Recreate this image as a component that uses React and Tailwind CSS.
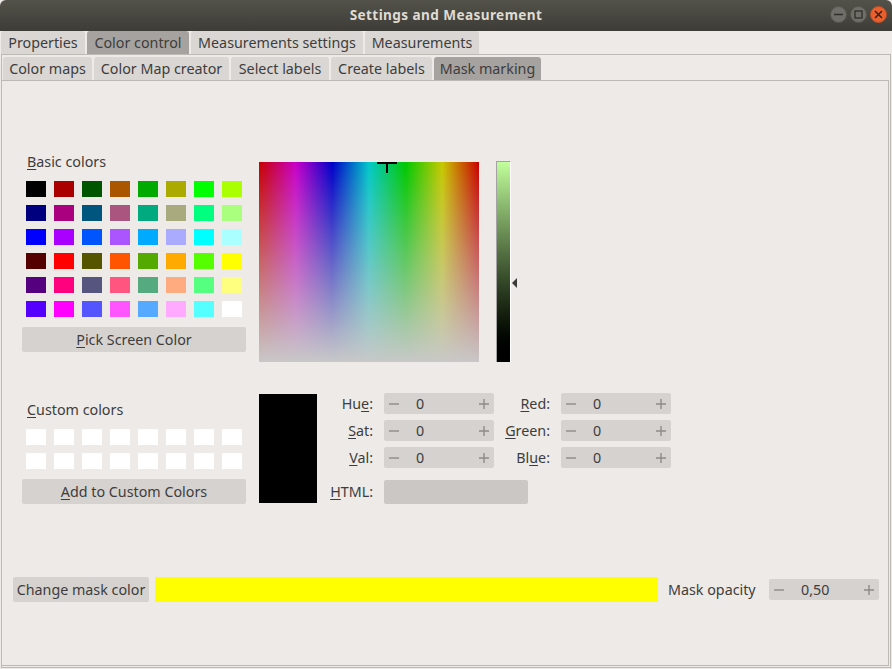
import React from 'react';

const basicColors = [
    '#000000', '#aa0000', '#005500', '#aa5500', '#00aa00', '#aaaa00', '#00ff00', '#aaff00',
    '#00007f', '#aa007f', '#00557f', '#aa557f', '#00aa7f', '#aaaa7f', '#00ff7f', '#aaff7f',
    '#0000ff', '#aa00ff', '#0055ff', '#aa55ff', '#00aaff', '#aaaaff', '#00ffff', '#aaffff',
    '#550000', '#ff0000', '#555500', '#ff5500', '#55aa00', '#ffaa00', '#55ff00', '#ffff00',
    '#55007f', '#ff007f', '#55557f', '#ff557f', '#55aa7f', '#ffaa7f', '#55ff7f', '#ffff7f',
    '#5500ff', '#ff00ff', '#5555ff', '#ff55ff', '#55aaff', '#ffaaff', '#55ffff', '#ffffff',
];

const outerTabs = [
    { label: 'Properties', width: 'w-[84px]' },
    { label: 'Color control', width: 'w-[102px]', active: true },
    { label: 'Measurements settings', width: 'w-[172px]' },
    { label: 'Measurements', width: 'w-[114px]' },
];

const innerTabs = [
    { label: 'Color maps', width: 'w-[89px]' },
    { label: 'Color Map creator', width: 'w-[135px]' },
    { label: 'Select labels', width: 'w-[98px]' },
    { label: 'Create labels', width: 'w-[101px]' },
    { label: 'Mask marking', width: 'w-[107px]', active: true },
];

function Tab({ label, width, active }) {
    return (
        <div className={`${width} h-[23px] flex items-center justify-center rounded-t-[3px] whitespace-nowrap ${active ? 'bg-[#a6a29f]' : 'bg-[#dad6d3]'}`}>
            {label}
        </div>
    );
}

function Spin({ value }) {
    return (
        <div className="w-[110px] h-[21px] flex items-center rounded-[2px] bg-[#d6d2cf]">
            <svg className="ml-[5px] shrink-0" width="10" height="10" viewBox="0 0 10 10">
                <path d="M0 5H10" stroke="#8f8b88" strokeWidth="1.4" />
            </svg>
            <span className="ml-[17px]">{value}</span>
            <svg className="ml-auto mr-[5px] shrink-0" width="10" height="10" viewBox="0 0 10 10">
                <path d="M0 5H10M5 0V10" stroke="#8f8b88" strokeWidth="1.4" />
            </svg>
        </div>
    );
}

function SpinRow({ left, leftKey, leftAfter, right, rightKey, rightAfter }) {
    return (
        <div className="flex items-center h-[21px]">
            <div className="w-[56px] text-right whitespace-nowrap">{left}<span className="underline underline-offset-2">{leftKey}</span>{leftAfter}</div>
            <div className="ml-[11px]"><Spin value="0" /></div>
            <div className="w-[56px] text-right whitespace-nowrap">{right}<span className="underline underline-offset-2">{rightKey}</span>{rightAfter}</div>
            <div className="ml-[11px]"><Spin value="0" /></div>
        </div>
    );
}

function WindowButton({ children, close }) {
    return (
        <div className={`w-[17px] h-[17px] rounded-full flex items-center justify-center border ${close ? 'bg-[#e9602f] border-[#b94d26]' : 'bg-[#6f6e68] border-[#55544e]'}`}>
            {children}
        </div>
    );
}

export default function App() {
    return (
        <div className="w-[892px] h-[669px] overflow-hidden flex flex-col bg-[#eeeae7] text-[#3d3d3d] text-[14.3px] leading-[20px] font-['Noto_Sans',sans-serif]">
            <div className="h-[31px] shrink-0 pb-[2px] flex items-center justify-center relative rounded-t-[6px] bg-gradient-to-b from-[#53524a] to-[#3d3c37]">
                <span className="text-[13.6px] font-bold tracking-[0.4px] text-[#dfdbd2]">Settings and Measurement</span>
                <div className="absolute right-[5px] top-[6px] flex gap-[3px]">
                    <WindowButton>
                        <svg width="9" height="9" viewBox="0 0 9 9"><path d="M0 4.5H9" stroke="#2f2e2a" strokeWidth="1.5" /></svg>
                    </WindowButton>
                    <WindowButton>
                        <svg width="9" height="9" viewBox="0 0 9 9"><rect x="1" y="1" width="7" height="7" fill="none" stroke="#2f2e2a" strokeWidth="1.3" /></svg>
                    </WindowButton>
                    <WindowButton close>
                        <svg width="9" height="9" viewBox="0 0 9 9"><path d="M1 1L8 8M8 1L1 8" stroke="#3a2015" strokeWidth="1.5" /></svg>
                    </WindowButton>
                </div>
            </div>

            <div className="flex gap-[2px] pl-[1px] shrink-0">
                {outerTabs.map((tab) => <Tab key={tab.label} {...tab} />)}
            </div>

            <div className="flex-1 flex flex-col mx-[1px] mb-[1px] border border-[#bdb9b5] pt-[2px]">
                <div className="flex gap-[2px] pl-[1px] shrink-0">
                    {innerTabs.map((tab) => <Tab key={tab.label} {...tab} />)}
                </div>

                <div className="flex-1 flex flex-col ml-[-1px] mr-px mb-[1px] border border-[#bdb9b5] pt-[71px]">
                    <div className="flex pl-[20px]">
                        <div className="w-[224px]">
                            <div className="pl-[5px] h-[20px] mb-[9px]"><span className="underline underline-offset-2">B</span>asic colors</div>
                            <div className="grid grid-cols-[repeat(8,20px)] gap-x-[8px] gap-y-[8px] pl-[4px]">
                                {basicColors.map((color) => (
                                    <div key={color} className="h-[16px]" style={{ backgroundColor: color }} />
                                ))}
                            </div>
                            <div className="mt-[10px] h-[25px] flex items-center justify-center rounded-[2px] bg-[#d6d2cf]">
                                <span><span className="underline underline-offset-2">P</span>ick Screen Color</span>
                            </div>
                        </div>

                        <div className="ml-[13px] mt-[10px] w-[220px] h-[200px] relative bg-[linear-gradient(to_bottom,rgba(200,200,200,0),#c8c8c8),linear-gradient(to_right,#c80000,#c800c8_16.67%,#0000c8_33.33%,#00c8c8_50%,#00c800_66.67%,#c8c800_83.33%,#c80000)]">
                            <svg className="absolute left-[118px] top-0" width="20" height="11" viewBox="0 0 20 11">
                                <path d="M0 1H20M10 0V11" stroke="#000" strokeWidth="2" />
                            </svg>
                        </div>

                        <div className="ml-[17px] mt-[9px] w-[15px] h-[201px] border-l border-t border-r border-l-[#a3a3a3] border-t-[#a3a3a3] border-r-white bg-gradient-to-b from-[#c2ff9c] to-black" />
                        <svg className="mt-[126px]" width="6" height="10" viewBox="0 0 6 10">
                            <path d="M6 0V10L1 5Z" fill="#3a3a3a" />
                        </svg>
                    </div>

                    <div className="flex pl-[20px] mt-[32px]">
                        <div className="w-[224px] pt-[6px]">
                            <div className="pl-[5px] h-[20px] mb-[9px]"><span className="underline underline-offset-2">C</span>ustom colors</div>
                            <div className="grid grid-cols-[repeat(8,20px)] gap-x-[8px] gap-y-[8px] pl-[4px]">
                                {Array.from({ length: 16 }).map((_, i) => (
                                    <div key={i} className="h-[16px] bg-white" />
                                ))}
                            </div>
                            <div className="mt-[10px] h-[25px] flex items-center justify-center rounded-[2px] bg-[#d6d2cf]">
                                <span><span className="underline underline-offset-2">A</span>dd to Custom Colors</span>
                            </div>
                        </div>

                        <div className="ml-[13px] w-[58px] h-[109px] bg-black" />

                        <div className="flex flex-col gap-[6px] mt-[-1px]">
                            <SpinRow left="Hu" leftKey="e" leftAfter=":" right="" rightKey="R" rightAfter="ed:" />
                            <SpinRow left="" leftKey="S" leftAfter="at:" right="" rightKey="G" rightAfter="reen:" />
                            <SpinRow left="" leftKey="V" leftAfter="al:" right="Bl" rightKey="u" rightAfter="e:" />
                            <div className="flex items-center mt-[6px]">
                                <div className="w-[56px] text-right"><span className="underline underline-offset-2">H</span>TML:</div>
                                <div className="ml-[11px] w-[144px] h-[24px] rounded-[2px] bg-[#cbc7c5]" />
                            </div>
                        </div>
                    </div>

                    <div className="flex items-center mt-[73px] pl-[11px]">
                        <div className="w-[136px] h-[25px] flex items-center justify-center rounded-[2px] bg-[#d6d2cf] whitespace-nowrap">Change mask color</div>
                        <div className="ml-[6px] w-[503px] h-[25px] bg-[#ffff00]" />
                        <div className="ml-[10px] w-[101px] whitespace-nowrap">Mask opacity</div>
                        <Spin value="0,50" />
                    </div>
                </div>
            </div>
        </div>
    );
}
